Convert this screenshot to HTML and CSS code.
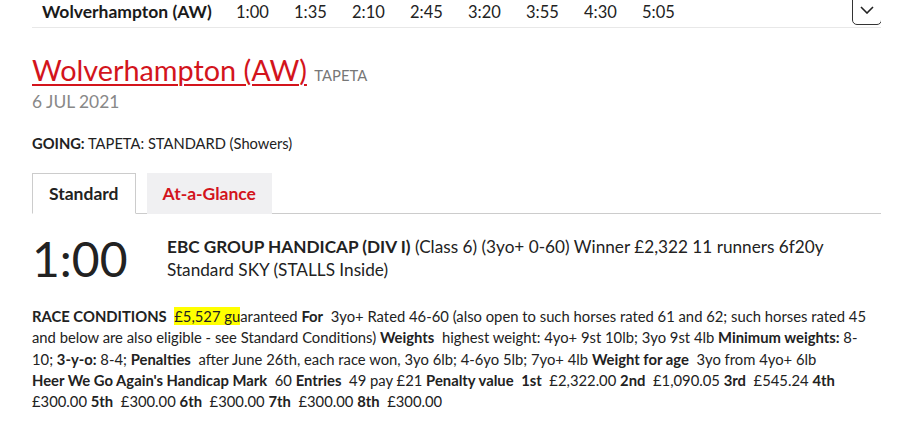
FILE: index.html
```html
<!DOCTYPE html>
<html lang="en">
<head>
  <meta charset="UTF-8" />
  <title>Wolverhampton (AW) - 6 Jul 2021</title>
  <link rel="stylesheet" href="styles.css">
</head>
<body>

  <nav class="meeting-bar">
    <span class="meeting-name">Wolverhampton (AW)</span>
    <ul class="race-times">
      <li>1:00</li>
      <li>1:35</li>
      <li>2:10</li>
      <li>2:45</li>
      <li>3:20</li>
      <li>3:55</li>
      <li>4:30</li>
      <li>5:05</li>
    </ul>
    <button class="meeting-toggle" aria-label="More meetings">
      <svg width="14" height="8" viewBox="0 0 14 8"><path d="M1 1l6 6 6-6" fill="none" stroke="#222" stroke-width="1.6"/></svg>
    </button>
  </nav>

  <main>
    <section class="course-head">
      <h1><a href="#" class="course-link">Wolverhampton (AW)</a> <span class="surface">TAPETA</span></h1>
      <div class="race-date">6 JUL 2021</div>
    </section>

    <p class="going"><strong>GOING:</strong> TAPETA: STANDARD (Showers)</p>

    <div class="tabs">
      <button class="tab active">Standard</button>
      <button class="tab">At-a-Glance</button>
    </div>

    <section class="race-head">
      <div class="race-time">1:00</div>
      <div class="race-title">
        <strong>EBC GROUP HANDICAP (DIV I)</strong> (Class 6) (3yo+ 0-60) Winner £2,322 11 runners 6f20y<br>
        Standard SKY (STALLS Inside)
      </div>
    </section>

    <p class="conditions">
      <strong>RACE CONDITIONS</strong>&nbsp; <mark>£5,527 gu</mark>aranteed <strong>For</strong>&nbsp; 3yo+ Rated 46-60 (also open to such horses rated 61 and 62; such horses rated 45 and below are also eligible - see Standard Conditions) <strong>Weights</strong>&nbsp; highest weight: 4yo+ 9st 10lb; 3yo 9st 4lb <strong>Minimum weights:</strong> 8-10; <strong>3-y-o:</strong> 8-4; <strong>Penalties</strong>&nbsp; after June 26th, each race won, 3yo 6lb; 4-6yo 5lb; 7yo+ 4lb <strong>Weight for age</strong>&nbsp; 3yo from 4yo+ 6lb <strong>Heer We Go Again's Handicap Mark</strong>&nbsp; 60 <strong>Entries</strong>&nbsp; 49 pay £21 <strong>Penalty value</strong>&nbsp; <strong>1st</strong>&nbsp; £2,322.00 <strong>2nd</strong>&nbsp; £1,090.05 <strong>3rd</strong>&nbsp; £545.24 <strong>4th</strong> £300.00 <strong>5th</strong>&nbsp; £300.00 <strong>6th</strong>&nbsp; £300.00 <strong>7th</strong>&nbsp; £300.00 <strong>8th</strong>&nbsp; £300.00
    </p>
  </main>

</body>
</html>
```

FILE: styles.css
```css
* {
  box-sizing: border-box;
  margin: 0;
  padding: 0;
}

body {
  font-family: Lato, 'Open Sans', sans-serif;
  background: #fff;
  color: #222;
  width: 849px;
  margin-left: 32px;
}

.meeting-bar {
  display: flex;
  align-items: center;
  height: 36px;
  border-bottom: 1px solid #e8e8e8;
  margin-top: -8px;
  padding-left: 10px;
  padding-top: 4px;
}

.meeting-name {
  font-weight: bold;
  font-size: 17.5px;
  color: #1a1a1a;
  width: 194px;
}

.race-times {
  display: flex;
  list-style: none;
  flex: 1;
  font-size: 16.5px;
}

.race-times li {
  width: 58px;
}

.meeting-toggle {
  width: 30px;
  height: 30px;
  border: 1px solid #333;
  border-radius: 5px;
  background: #fff;
  display: flex;
  align-items: center;
  justify-content: center;
  margin-right: -1px;
  margin-top: -4px;
}

.course-head {
  margin-top: 26px;
}

.course-head h1 {
  font-weight: normal;
  font-size: 28.8px;
  line-height: 32px;
}

.course-link {
  color: #d3141c;
  text-decoration: underline;
  text-decoration-thickness: 2px;
  text-underline-offset: 3px;
}

.surface {
  font-size: 14.8px;
  color: #777;
}

.race-date {
  font-size: 17.4px;
  line-height: 22px;
  color: #888;
}

.going {
  font-size: 14.7px;
  margin-top: 21px;
}

.tabs {
  display: flex;
  gap: 11px;
  border-bottom: 1px solid #ccc;
  margin-top: 21px;
}

.tab {
  font-family: inherit;
  font-size: 17.5px;
  font-weight: bold;
  height: 41px;
  border: none;
  background: #f0f0f2;
  color: #d3141c;
  padding: 0 16px;
  margin-bottom: -1px;
}

.tab.active {
  background: #fff;
  color: #222;
  border: 1px solid #ccc;
  border-bottom: 1px solid #fff;
}

.race-head {
  display: flex;
  margin-top: 20px;
}

.race-time {
  font-size: 48px;
  line-height: 50px;
  width: 135px;
  color: #222;
}

.race-title {
  font-size: 17.2px;
  line-height: 23px;
  padding-top: 1px;
}

.conditions {
  font-size: 14.8px;
  line-height: 21.3px;
  margin-top: 22px;
  padding-right: 4px;
}

.conditions strong {
  white-space: nowrap;
}

.conditions mark {
  background: #ffff00;
  color: #222;
}
```
